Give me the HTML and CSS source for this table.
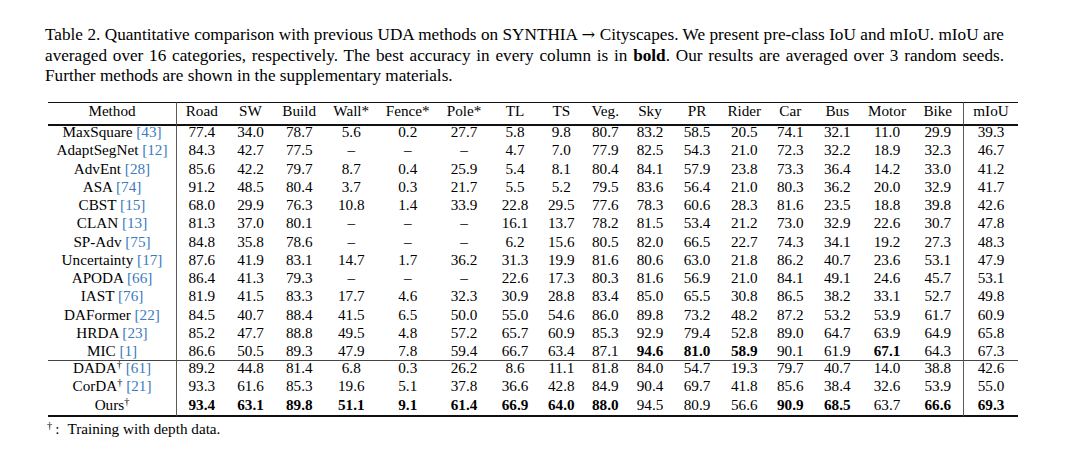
FILE: index.html
```html
<!DOCTYPE html>
<html lang="en">
<head>
<meta charset="utf-8">
<title>Table 2</title>
<link rel="stylesheet" href="styles.css">
</head>
<body>
<div class="page">
  <p class="caption">
    <span class="line">Table 2. Quantitative comparison with previous UDA methods on SYNTHIA <span class="arrow">&rarr;</span> Cityscapes. We present pre-class IoU and mIoU. mIoU are</span>
    <span class="line">averaged over 16 categories, respectively. The best accuracy in every column is in <b>bold</b>. Our results are averaged over 3 random seeds.</span>
    <span class="line last">Further methods are shown in the supplementary materials.</span>
  </p>
  <table class="results">
    <colgroup>
      <col class="c-method"><col class="c-road"><col class="c-sw"><col class="c-build"><col class="c-wall"><col class="c-fence"><col class="c-pole"><col class="c-tl"><col class="c-ts"><col class="c-veg"><col class="c-sky"><col class="c-pr"><col class="c-rider"><col class="c-car"><col class="c-bus"><col class="c-motor"><col class="c-bike"><col class="c-miou">
    </colgroup>
    <thead>
      <tr><th class="method">Method</th><th>Road</th><th>SW</th><th>Build</th><th>Wall*</th><th>Fence*</th><th>Pole*</th><th>TL</th><th>TS</th><th>Veg.</th><th>Sky</th><th>PR</th><th>Rider</th><th>Car</th><th>Bus</th><th>Motor</th><th>Bike</th><th class="miou">mIoU</th></tr>
    </thead>
    <tbody class="group">
      <tr><td class="method">MaxSquare <a class="cite">[43]</a></td><td>77.4</td><td>34.0</td><td>78.7</td><td>5.6</td><td>0.2</td><td>27.7</td><td>5.8</td><td>9.8</td><td>80.7</td><td>83.2</td><td>58.5</td><td>20.5</td><td>74.1</td><td>32.1</td><td>11.0</td><td>29.9</td><td class="miou">39.3</td></tr>
      <tr><td class="method">AdaptSegNet <a class="cite">[12]</a></td><td>84.3</td><td>42.7</td><td>77.5</td><td>&ndash;</td><td>&ndash;</td><td>&ndash;</td><td>4.7</td><td>7.0</td><td>77.9</td><td>82.5</td><td>54.3</td><td>21.0</td><td>72.3</td><td>32.2</td><td>18.9</td><td>32.3</td><td class="miou">46.7</td></tr>
      <tr><td class="method">AdvEnt <a class="cite">[28]</a></td><td>85.6</td><td>42.2</td><td>79.7</td><td>8.7</td><td>0.4</td><td>25.9</td><td>5.4</td><td>8.1</td><td>80.4</td><td>84.1</td><td>57.9</td><td>23.8</td><td>73.3</td><td>36.4</td><td>14.2</td><td>33.0</td><td class="miou">41.2</td></tr>
      <tr><td class="method">ASA <a class="cite">[74]</a></td><td>91.2</td><td>48.5</td><td>80.4</td><td>3.7</td><td>0.3</td><td>21.7</td><td>5.5</td><td>5.2</td><td>79.5</td><td>83.6</td><td>56.4</td><td>21.0</td><td>80.3</td><td>36.2</td><td>20.0</td><td>32.9</td><td class="miou">41.7</td></tr>
      <tr><td class="method">CBST <a class="cite">[15]</a></td><td>68.0</td><td>29.9</td><td>76.3</td><td>10.8</td><td>1.4</td><td>33.9</td><td>22.8</td><td>29.5</td><td>77.6</td><td>78.3</td><td>60.6</td><td>28.3</td><td>81.6</td><td>23.5</td><td>18.8</td><td>39.8</td><td class="miou">42.6</td></tr>
      <tr><td class="method">CLAN <a class="cite">[13]</a></td><td>81.3</td><td>37.0</td><td>80.1</td><td>&ndash;</td><td>&ndash;</td><td>&ndash;</td><td>16.1</td><td>13.7</td><td>78.2</td><td>81.5</td><td>53.4</td><td>21.2</td><td>73.0</td><td>32.9</td><td>22.6</td><td>30.7</td><td class="miou">47.8</td></tr>
      <tr><td class="method">SP-Adv <a class="cite">[75]</a></td><td>84.8</td><td>35.8</td><td>78.6</td><td>&ndash;</td><td>&ndash;</td><td>&ndash;</td><td>6.2</td><td>15.6</td><td>80.5</td><td>82.0</td><td>66.5</td><td>22.7</td><td>74.3</td><td>34.1</td><td>19.2</td><td>27.3</td><td class="miou">48.3</td></tr>
      <tr><td class="method">Uncertainty <a class="cite">[17]</a></td><td>87.6</td><td>41.9</td><td>83.1</td><td>14.7</td><td>1.7</td><td>36.2</td><td>31.3</td><td>19.9</td><td>81.6</td><td>80.6</td><td>63.0</td><td>21.8</td><td>86.2</td><td>40.7</td><td>23.6</td><td>53.1</td><td class="miou">47.9</td></tr>
      <tr><td class="method">APODA <a class="cite">[66]</a></td><td>86.4</td><td>41.3</td><td>79.3</td><td>&ndash;</td><td>&ndash;</td><td>&ndash;</td><td>22.6</td><td>17.3</td><td>80.3</td><td>81.6</td><td>56.9</td><td>21.0</td><td>84.1</td><td>49.1</td><td>24.6</td><td>45.7</td><td class="miou">53.1</td></tr>
      <tr><td class="method">IAST <a class="cite">[76]</a></td><td>81.9</td><td>41.5</td><td>83.3</td><td>17.7</td><td>4.6</td><td>32.3</td><td>30.9</td><td>28.8</td><td>83.4</td><td>85.0</td><td>65.5</td><td>30.8</td><td>86.5</td><td>38.2</td><td>33.1</td><td>52.7</td><td class="miou">49.8</td></tr>
      <tr><td class="method">DAFormer <a class="cite">[22]</a></td><td>84.5</td><td>40.7</td><td>88.4</td><td>41.5</td><td>6.5</td><td>50.0</td><td>55.0</td><td>54.6</td><td>86.0</td><td>89.8</td><td>73.2</td><td>48.2</td><td>87.2</td><td>53.2</td><td>53.9</td><td>61.7</td><td class="miou">60.9</td></tr>
      <tr><td class="method">HRDA <a class="cite">[23]</a></td><td>85.2</td><td>47.7</td><td>88.8</td><td>49.5</td><td>4.8</td><td>57.2</td><td>65.7</td><td>60.9</td><td>85.3</td><td>92.9</td><td>79.4</td><td>52.8</td><td>89.0</td><td>64.7</td><td>63.9</td><td>64.9</td><td class="miou">65.8</td></tr>
      <tr><td class="method">MIC <a class="cite">[1]</a></td><td>86.6</td><td>50.5</td><td>89.3</td><td>47.9</td><td>7.8</td><td>59.4</td><td>66.7</td><td>63.4</td><td>87.1</td><td class="best">94.6</td><td class="best">81.0</td><td class="best">58.9</td><td>90.1</td><td>61.9</td><td class="best">67.1</td><td>64.3</td><td class="miou">67.3</td></tr>
    </tbody>
    <tbody class="group depth">
      <tr><td class="method">DADA<sup>&dagger;</sup> <a class="cite">[61]</a></td><td>89.2</td><td>44.8</td><td>81.4</td><td>6.8</td><td>0.3</td><td>26.2</td><td>8.6</td><td>11.1</td><td>81.8</td><td>84.0</td><td>54.7</td><td>19.3</td><td>79.7</td><td>40.7</td><td>14.0</td><td>38.8</td><td class="miou">42.6</td></tr>
      <tr><td class="method">CorDA<sup>&dagger;</sup> <a class="cite">[21]</a></td><td>93.3</td><td>61.6</td><td>85.3</td><td>19.6</td><td>5.1</td><td>37.8</td><td>36.6</td><td>42.8</td><td>84.9</td><td>90.4</td><td>69.7</td><td>41.8</td><td>85.6</td><td>38.4</td><td>32.6</td><td>53.9</td><td class="miou">55.0</td></tr>
      <tr><td class="method">Ours<sup>&dagger;</sup></td><td class="best">93.4</td><td class="best">63.1</td><td class="best">89.8</td><td class="best">51.1</td><td class="best">9.1</td><td class="best">61.4</td><td class="best">66.9</td><td class="best">64.0</td><td class="best">88.0</td><td>94.5</td><td>80.9</td><td>56.6</td><td class="best">90.9</td><td class="best">68.5</td><td>63.7</td><td class="best">66.6</td><td class="miou best">69.3</td></tr>
    </tbody>
  </table>
  <p class="footnote"><sup class="mark">&dagger;</sup>:<span class="gap"></span>Training with depth data.</p>
</div>
</body>
</html>
```

FILE: styles.css
```css
html, body {
  margin: 0;
  padding: 0;
  background: #ffffff;
}

body {
  font-family: "Liberation Serif", "Times New Roman", "DejaVu Serif", serif;
  color: #000000;
}

.page {
  padding: 25px 0 0 45px;
}

.caption {
  margin: 0 0 15px 0;
  width: 959px;
  font-size: 17.2px;
  line-height: 20.7px;
}

.caption .line {
  display: block;
  text-align: justify;
  text-align-last: justify;
}

.caption .line.last {
  text-align-last: left;
}

.caption .arrow {
  font-family: "DejaVu Serif", serif;
  font-size: 0.95em;
}

.caption b {
  font-weight: bold;
}

.results {
  margin-left: 3px;
  width: 970px;
  table-layout: fixed;
  border-collapse: separate;
  border-spacing: 0;
  font-size: 15.2px;
}

.c-method { width: 129px; }
.c-road { width: 49.5px; }
.c-sw { width: 48px; }
.c-build { width: 49.5px; }
.c-wall { width: 54.5px; }
.c-fence { width: 58.5px; }
.c-pole { width: 54px; }
.c-tl { width: 48px; }
.c-ts { width: 44.5px; }
.c-veg { width: 43.5px; }
.c-sky { width: 46px; }
.c-pr { width: 48px; }
.c-rider { width: 46.5px; }
.c-car { width: 45.5px; }
.c-bus { width: 48.5px; }
.c-motor { width: 51px; }
.c-bike { width: 50.5px; }
.c-miou { width: 55px; }

.results th,
.results td {
  text-align: center;
  white-space: nowrap;
  line-height: 12px;
  vertical-align: top;
  font-weight: normal;
}

.results th {
  padding: 2px 0 7px;
  border-top: 1px solid #111111;
  border-bottom: 2px solid #111111;
}

.results td {
  padding: 0 0 6.25px;
}

.results .method {
  border-right: 1px solid #5a5a5a;
}

.results .miou {
  border-left: 1px solid #5a5a5a;
}

.results tbody.group tr:last-child td {
  padding-bottom: 3px;
  border-bottom: 1px solid #444444;
}

.results tbody.depth tr:first-child td {
  padding-top: 1px;
}

.results tbody.depth tr:last-child td {
  padding-bottom: 4.5px;
  border-bottom: 2px solid #111111;
}

.results .best {
  font-weight: bold;
}

.cite {
  color: #3b7bbd;
  text-decoration: none;
}

sup {
  font-size: 0.68em;
  line-height: 0;
  vertical-align: 0.5em;
}

.footnote {
  margin: 4px 0 0 2px;
  font-size: 15.2px;
  line-height: 16px;
}

.footnote .mark {
  margin-right: 3px;
}

.footnote .gap {
  display: inline-block;
  width: 8px;
}
```
